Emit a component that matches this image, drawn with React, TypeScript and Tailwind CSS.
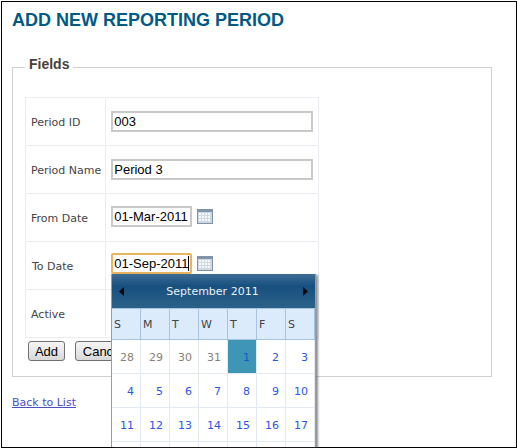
import React from "react";

const Cal = () => (
  <svg width="16" height="15" viewBox="0 0 16 15" className="block">
    <rect x="0.5" y="0.5" width="15" height="14" fill="#cfd8e2" stroke="#7f93a8" />
    <rect x="1" y="1" width="14" height="2" fill="#8094aa" />
    <g fill="#f6f8fa">
      {[2, 5, 8, 11].map((x) => [4, 7, 10].map((y) => <rect key={x + "-" + y} x={x} y={y} width="2" height="2" />))}
    </g>
  </svg>
);

const labelCell = "border border-[#e9edf2] pl-[5px] pr-1 pt-[3px] align-middle text-[#444] w-[80px] whitespace-nowrap";
const fieldCell = "border border-[#e9edf2] pl-[5px] align-middle";
const inputBase = "block h-[21px] border-2 border-[#c9c9c9] bg-white px-[1px] text-[13px] text-black outline-none font-['Liberation_Sans',sans-serif]";

const Row = ({ label, children, shift }: { label: string; children?: React.ReactNode; shift?: boolean }) => (
  <tr className="h-[48px]">
    <td className={labelCell}><span className={shift ? "pl-[1px]" : ""}>{label}</span></td>
    <td className={fieldCell}>{children}</td>
  </tr>
);

const Arrow = ({ right }: { right?: boolean }) => (
  <svg width="5" height="9" viewBox="0 0 5 9" className="block">
    <path d={right ? "M0 0L5 4.5L0 9Z" : "M5 0L0 4.5L5 9Z"} fill="#0a0a0a" />
  </svg>
);

const weekDays = ["S", "M", "T", "W", "T", "F", "S"];
const weeks: [number, boolean][][] = [
  [[28, true], [29, true], [30, true], [31, true], [1, false], [2, false], [3, false]],
  [[4, false], [5, false], [6, false], [7, false], [8, false], [9, false], [10, false]],
  [[11, false], [12, false], [13, false], [14, false], [15, false], [16, false], [17, false]],
];

const Calendar = () => (
  <div className="absolute left-[111px] top-[274px] w-[205px] h-[173px] overflow-hidden bg-white border-l border-r border-[#8a9fbc] shadow-[2px_1px_2px_rgba(70,70,70,0.6)]">
    <div className="flex h-[34px] items-center justify-between px-[7px] bg-[linear-gradient(#3e6d96_0%,#17507f_35%,#2c6288_100%)]">
      <Arrow />
      <span className="text-[#e8f0f8] pt-[3px] -ml-[2px]">September 2011</span>
      <Arrow right />
    </div>
    <div className="grid grid-cols-[repeat(7,29px)] h-[32px] bg-[#dcebfc] border-b border-t border-[#a6c3e0]">
      {weekDays.map((d, i) => (
        <div key={i} className="flex items-center pl-[2px] pt-[3px] border-r border-[#a6c3e0] text-[#444]">{d}</div>
      ))}
    </div>
    {weeks.map((w, i) => (
      <div key={i} className="grid grid-cols-[repeat(7,29px)] h-[34px]">
        {w.map(([n, muted], j) => (
          <div
            key={j}
            className={
              "flex items-center justify-end pr-[6px] pt-[3px] border-b border-r border-[#e3e9f3] " +
              (n === 1 ? "bg-[#3f95b6] text-[#1a55c4] " : muted ? "text-[#8a8078] " : "text-[#2a55e8] ")
            }
          >
            {n}
          </div>
        ))}
      </div>
    ))}
    <div className="grid grid-cols-[repeat(7,29px)] h-[34px]">
      {weekDays.map((_, i) => (
        <div key={i} className="border-r border-[#e3e9f3]" />
      ))}
    </div>
  </div>
);

export default function App() {
  return (
    <div className="relative w-[517px] h-[448px] pl-[1px] pt-[1px] bg-white font-['DejaVu_Sans',sans-serif] text-[11px]">
      <div className="h-[447px] border border-black pl-[10px] pr-[24px] pt-[8px]">
        <h1 className="font-['Liberation_Sans',sans-serif] font-bold text-[18px] leading-[20px] text-[#005a85] uppercase">
          Add New Reporting Period
        </h1>
        <fieldset className="mt-[27px] h-[320px] border border-[#d0d0d0] pl-[12px]">
          <legend className="px-[4px] pb-[6px] font-['Liberation_Sans',sans-serif] font-bold text-[14px] leading-[15px] text-[#4a4038]">Fields</legend>
          <table className="mt-[19px] w-[294px] border-collapse">
            <tbody>
              <Row label="Period ID">
                <input readOnly value="003" className={inputBase + " w-[202px]"} />
              </Row>
              <Row label="Period Name">
                <input readOnly value="Period 3" className={inputBase + " w-[202px]"} />
              </Row>
              <Row label="From Date">
                <div className="flex items-center gap-[5px] pb-[3px]">
                  <input readOnly value="01-Mar-2011" className={inputBase + " w-[81px]"} />
                  <Cal />
                </div>
              </Row>
              <Row label="To Date" shift>
                <div className="flex items-center gap-[5px] pb-[4px]">
                  <div className="h-[21px] w-[81px] border-2 border-[#e8b45c] rounded-[2px] px-[1px] leading-[17px] text-[13px] text-black font-['Liberation_Sans',sans-serif] whitespace-nowrap overflow-hidden">
                    01-Sep-2011<span className="border-l border-black" />
                  </div>
                  <Cal />
                </div>
              </Row>
              <Row label="Active" />
            </tbody>
          </table>
          <div className="flex gap-[10px] mt-[3px] ml-[3px] font-['Liberation_Sans',sans-serif]">
            <button className="h-[20px] w-[37px] rounded-[3px] border border-[#707070] bg-[linear-gradient(#f6f6f6,#d8d8d8)] text-[13px] leading-none text-black">Add</button>
            <button className="h-[20px] w-[56px] rounded-[3px] border border-[#707070] bg-[linear-gradient(#f6f6f6,#d8d8d8)] text-[13px] leading-none text-black">Cancel</button>
          </div>
        </fieldset>
        <a className="block mt-[18px] text-[#4a4fc4] underline leading-[15px]">Back to List</a>
      </div>
      <Calendar />
    </div>
  );
}
